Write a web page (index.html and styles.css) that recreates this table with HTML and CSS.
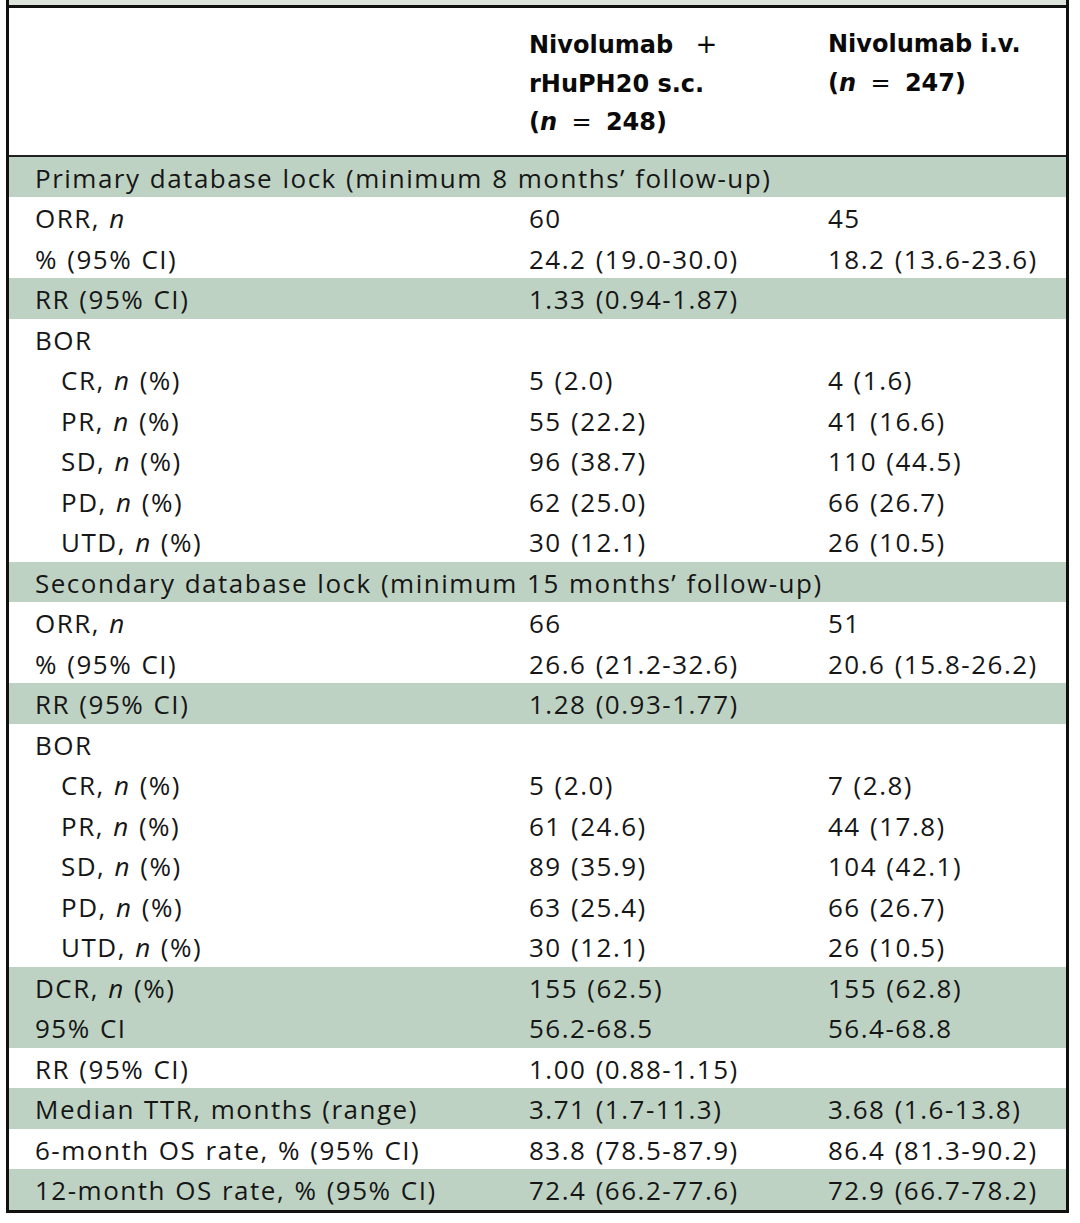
FILE: index.html
```html
<!DOCTYPE html>
<html>
<head>
<meta charset="utf-8">
<link rel="stylesheet" href="styles.css">
</head>
<body>
<div class="frame">
  <div class="prev-strip"></div>
  <table class="data">
    <colgroup>
      <col class="c1"><col class="c2"><col class="c3">
    </colgroup>
    <thead>
      <tr class="head">
        <th></th>
        <th>Nivolumab <span class="op plus">+</span><br>rHuPH20 s.c.<br>(<i>n</i> <span class="op">=</span> 248)</th>
        <th>Nivolumab i.v.<br>(<i>n</i> <span class="op">=</span> 247)</th>
      </tr>
    </thead>
    <tbody>
      <tr class="g"><td colspan="3">Primary database lock (minimum 8 months’ follow-up)</td></tr>
      <tr><td>ORR, <i>n</i></td><td>60</td><td>45</td></tr>
      <tr><td>% (95% CI)</td><td>24.2 (19.0-30.0)</td><td>18.2 (13.6-23.6)</td></tr>
      <tr class="g"><td>RR (95% CI)</td><td>1.33 (0.94-1.87)</td><td></td></tr>
      <tr><td>BOR</td><td></td><td></td></tr>
      <tr><td class="ind">CR, <i>n</i> (%)</td><td>5 (2.0)</td><td>4 (1.6)</td></tr>
      <tr><td class="ind">PR, <i>n</i> (%)</td><td>55 (22.2)</td><td>41 (16.6)</td></tr>
      <tr><td class="ind">SD, <i>n</i> (%)</td><td>96 (38.7)</td><td>110 (44.5)</td></tr>
      <tr><td class="ind">PD, <i>n</i> (%)</td><td>62 (25.0)</td><td>66 (26.7)</td></tr>
      <tr><td class="ind">UTD, <i>n</i> (%)</td><td>30 (12.1)</td><td>26 (10.5)</td></tr>
      <tr class="g"><td colspan="3">Secondary database lock (minimum 15 months’ follow-up)</td></tr>
      <tr><td>ORR, <i>n</i></td><td>66</td><td>51</td></tr>
      <tr><td>% (95% CI)</td><td>26.6 (21.2-32.6)</td><td>20.6 (15.8-26.2)</td></tr>
      <tr class="g"><td>RR (95% CI)</td><td>1.28 (0.93-1.77)</td><td></td></tr>
      <tr><td>BOR</td><td></td><td></td></tr>
      <tr><td class="ind">CR, <i>n</i> (%)</td><td>5 (2.0)</td><td>7 (2.8)</td></tr>
      <tr><td class="ind">PR, <i>n</i> (%)</td><td>61 (24.6)</td><td>44 (17.8)</td></tr>
      <tr><td class="ind">SD, <i>n</i> (%)</td><td>89 (35.9)</td><td>104 (42.1)</td></tr>
      <tr><td class="ind">PD, <i>n</i> (%)</td><td>63 (25.4)</td><td>66 (26.7)</td></tr>
      <tr><td class="ind">UTD, <i>n</i> (%)</td><td>30 (12.1)</td><td>26 (10.5)</td></tr>
      <tr class="g"><td>DCR, <i>n</i> (%)</td><td>155 (62.5)</td><td>155 (62.8)</td></tr>
      <tr class="g"><td>95% CI</td><td>56.2-68.5</td><td>56.4-68.8</td></tr>
      <tr><td>RR (95% CI)</td><td>1.00 (0.88-1.15)</td><td></td></tr>
      <tr class="g"><td>Median TTR, months (range)</td><td>3.71 (1.7-11.3)</td><td>3.68 (1.6-13.8)</td></tr>
      <tr><td>6-month OS rate, % (95% CI)</td><td>83.8 (78.5-87.9)</td><td>86.4 (81.3-90.2)</td></tr>
      <tr class="g"><td>12-month OS rate, % (95% CI)</td><td>72.4 (66.2-77.6)</td><td>72.9 (66.7-78.2)</td></tr>
    </tbody>
  </table>
</div>
</body>
</html>
```
FILE: styles.css
```css
html, body {
  margin: 0;
  padding: 0;
  background: #ffffff;
}

.frame {
  margin-left: 6px;
  width: 1057px;
  border-left: 3px solid #111111;
  border-right: 3px solid #111111;
  border-bottom: 3px solid #111111;
}

.prev-strip {
  height: 5px;
  background: #dce4dc;
  border-bottom: 3px solid #111111;
}

.data {
  width: 1057px;
  border-collapse: collapse;
  table-layout: fixed;
  font-family: "Open Sans", "Liberation Sans", sans-serif;
  font-size: 26px;
  color: #161616;
}

.c1 { width: 494px; }
.c2 { width: 299px; }
.c3 { width: 264px; }

.head th {
  height: 148px;
  box-sizing: border-box;
  padding: 17px 0 0 26px;
  vertical-align: top;
  text-align: left;
  font-family: "DejaVu Sans", "Liberation Sans", sans-serif;
  font-weight: 700;
  font-size: 24px;
  line-height: 38.5px;
  color: #0a0a0a;
  border-bottom: 2px solid #222222;
}

.head th .op {
  font-weight: 400;
  margin: 0 6px;
}

.head th .op.plus {
  margin-left: 14px;
  font-size: 26px;
}

.data td {
  height: 40.5px;
  box-sizing: border-box;
  padding: 3px 0 0 26px;
  line-height: 37px;
  white-space: nowrap;
  letter-spacing: 1.5px;
  word-spacing: 1px;
}

.data td.ind {
  padding-left: 52px;
}

.data tr.g td {
  background: #bed2c4;
}
```
